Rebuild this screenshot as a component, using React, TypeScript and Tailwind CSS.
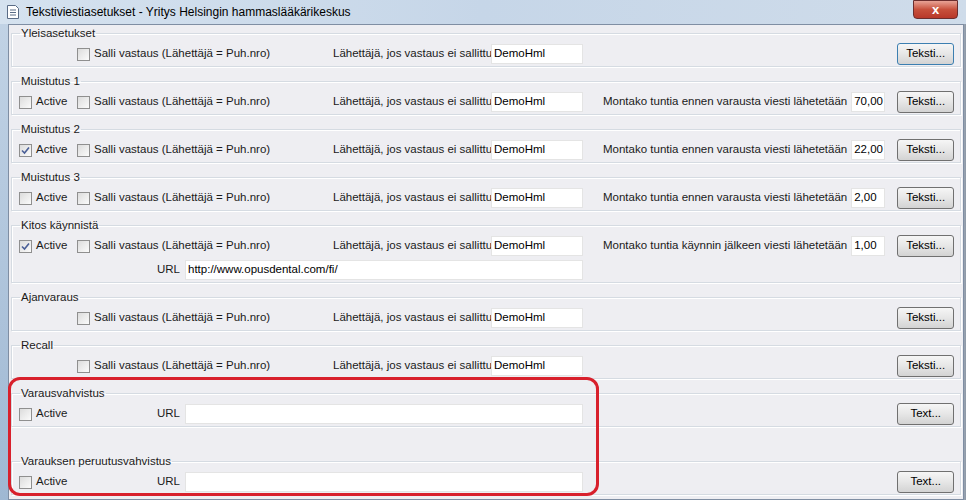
import React from "react";

const font = { fontFamily: '"Liberation Sans", Arial, sans-serif' };

const Check = ({ checked }: { checked?: boolean }) => (
  <span className="w-[13px] h-[13px] border border-[#8f8f8f] bg-gradient-to-br from-[#dcdcdc] to-[#fbfbfb] flex items-center justify-center shrink-0">
    {checked && (
      <svg width="9" height="9" viewBox="0 0 9 9">
        <path d="M1 4.5 L3.5 7 L8 1.5" stroke="#4a5f97" strokeWidth="1.6" fill="none" />
      </svg>
    )}
  </span>
);

const Input = ({ value, w }: { value?: string; w: string }) => (
  <div className={`${w} h-[20px] bg-white border border-[#e4e4e4] flex items-center px-[2px] text-[11.5px] text-black whitespace-nowrap`}>
    {value}
  </div>
);

const Button = ({ label, focus }: { label: string; focus?: boolean }) => (
  <div
    className={`w-[57px] h-[22px] rounded-[3px] border ${focus ? "border-[#3c7fb1]" : "border-[#707070]"} bg-gradient-to-b from-[#f6f6f6] via-[#e6e6e6] to-[#d3d3d3] flex items-center justify-center text-[11.5px] text-black`}
  >
    {label}
  </div>
);

type Row = {
  active?: boolean | null;
  salli?: boolean;
  sender?: boolean;
  hours?: string;
  hoursLabel?: string;
  btn?: string;
  focus?: boolean;
};

const MainRow = ({ r }: { r: Row }) => (
  <div className="h-[24px] flex items-center whitespace-nowrap">
    <div className="w-[65px] flex items-center gap-[4px] pl-[7px]">
      {r.active !== null && (
        <>
          <Check checked={r.active} />
          <span>Active</span>
        </>
      )}
    </div>
    <div className="w-[256px] flex items-center gap-[4px]">
      {r.salli && (
        <>
          <Check />
          <span>Salli vastaus (Lähettäjä = Puh.nro)</span>
        </>
      )}
    </div>
    <div className="w-[270px] flex items-center">
      {r.sender && (
        <>
          <span className="w-[158px]">Lähettäjä, jos vastaus ei sallittu</span>
          <Input value="DemoHml" w="w-[92px]" />
        </>
      )}
    </div>
    <div className="flex-1 flex items-center justify-end gap-[4px] pr-[6px]">
      {r.hours && (
        <>
          <span>{r.hoursLabel ?? "Montako tuntia ennen varausta viesti lähetetään"}</span>
          <Input value={r.hours} w="w-[34px]" />
        </>
      )}
      {r.btn && (
        <div className="ml-[8px]">
          <Button label={r.btn} focus={r.focus} />
        </div>
      )}
    </div>
  </div>
);

const Group = ({
  title,
  children,
  extra = "mt-[7px]",
}: {
  title: string;
  children: React.ReactNode;
  extra?: string;
}) => (
  <fieldset className={`border border-[#d5dbe2] shadow-[inset_1px_1px_0_#fff,1px_1px_0_#fff] ${extra}`}>
    <legend className="ml-[8px] px-[1px] h-[14px] leading-[14px] whitespace-nowrap">{title}</legend>
    <div className="pt-[2px]">{children}</div>
  </fieldset>
);

const UrlRow = ({ value }: { value?: string }) => (
  <div className="h-[24px] flex items-center">
    <div className="w-[145px]" />
    <span className="w-[28px]">URL</span>
    <Input value={value} w="w-[398px]" />
  </div>
);

const UrlActiveRow = () => (
  <div className="h-[24px] flex items-center">
    <div className="w-[145px] flex items-center gap-[4px] pl-[7px]">
      <Check />
      <span>Active</span>
    </div>
    <span className="w-[28px]">URL</span>
    <Input w="w-[398px]" />
    <div className="flex-1 flex justify-end pr-[6px]">
      <Button label="Text..." />
    </div>
  </div>
);

export default function App() {
  return (
    <div className="w-[966px] h-[500px] overflow-hidden bg-gradient-to-b from-[#c3d4e6] to-[#9fb8d3] flex flex-col text-[11.5px] text-[#1a1a1a]" style={font}>
      {/* title bar */}
      <div className="h-[24px] flex items-center shrink-0 relative bg-gradient-to-r from-[#d5e2ef] via-[#c6d6e8] to-[#cfdcea]">
        <svg className="ml-[6px]" width="14" height="16" viewBox="0 0 14 16">
          <path d="M1.5 1.5h8l3 3v10h-11z" fill="#fff" stroke="#5a6c86" />
          <path d="M4 6h6M4 8.5h6M4 11h6" stroke="#5a6c86" />
        </svg>
        <span className="ml-[6px] text-[12px] text-black">Tekstiviestiasetukset - Yritys Helsingin hammaslääkärikeskus</span>
        <div className="absolute right-[8px] top-0 w-[45px] h-[19px] rounded-b-[4px] border border-[#6b2e2e] bg-gradient-to-b from-[#e8a396] via-[#c7503c] to-[#b8382a] flex items-center justify-center text-white font-bold text-[13px]">
          x
        </div>
      </div>
      <div className="flex flex-1 min-h-0">
        <div className="w-[8px] shrink-0" />
        <div className="flex-1 bg-[#eeeef2] border border-[#7f8ea3] px-[2px] relative">
          <Group title="Yleisasetukset" extra="mt-[1px]">
            <MainRow r={{ active: null, salli: true, sender: true, btn: "Teksti...", focus: true }} />
          </Group>
          <Group title="Muistutus 1">
            <MainRow r={{ active: false, salli: true, sender: true, hours: "70,00", btn: "Teksti..." }} />
          </Group>
          <Group title="Muistutus 2">
            <MainRow r={{ active: true, salli: true, sender: true, hours: "22,00", btn: "Teksti..." }} />
          </Group>
          <Group title="Muistutus 3">
            <MainRow r={{ active: false, salli: true, sender: true, hours: "2,00", btn: "Teksti..." }} />
          </Group>
          <Group title="Kitos käynnistä">
            <MainRow
              r={{
                active: true,
                salli: true,
                sender: true,
                hours: "1,00",
                hoursLabel: "Montako tuntia käynnin jälkeen viesti lähetetään",
                btn: "Teksti...",
              }}
            />
            <UrlRow value="http://www.opusdental.com/fi/" />
          </Group>
          <Group title="Ajanvaraus">
            <MainRow r={{ active: null, salli: true, sender: true, btn: "Teksti..." }} />
          </Group>
          <Group title="Recall">
            <MainRow r={{ active: null, salli: true, sender: true, btn: "Teksti..." }} />
          </Group>
          <Group title="Varausvahvistus">
            <UrlActiveRow />
          </Group>
          <Group title="Varauksen peruutusvahvistus" extra="mt-[27px]">
            <UrlActiveRow />
          </Group>
          <div className="pl-[24px] pt-[6px] whitespace-nowrap">Tekstiviestit lähetetään automaattisesti</div>
          {/* highlight */}
          <div className="absolute left-[-1px] top-[352px] w-[591px] h-[119px] border-[3px] border-[#d8202c] rounded-[12px] pointer-events-none" />
        </div>
        <div className="w-[10px] shrink-0 bg-gradient-to-r from-[#9aa5b3] to-[#5b6673]" />
      </div>
    </div>
  );
}
